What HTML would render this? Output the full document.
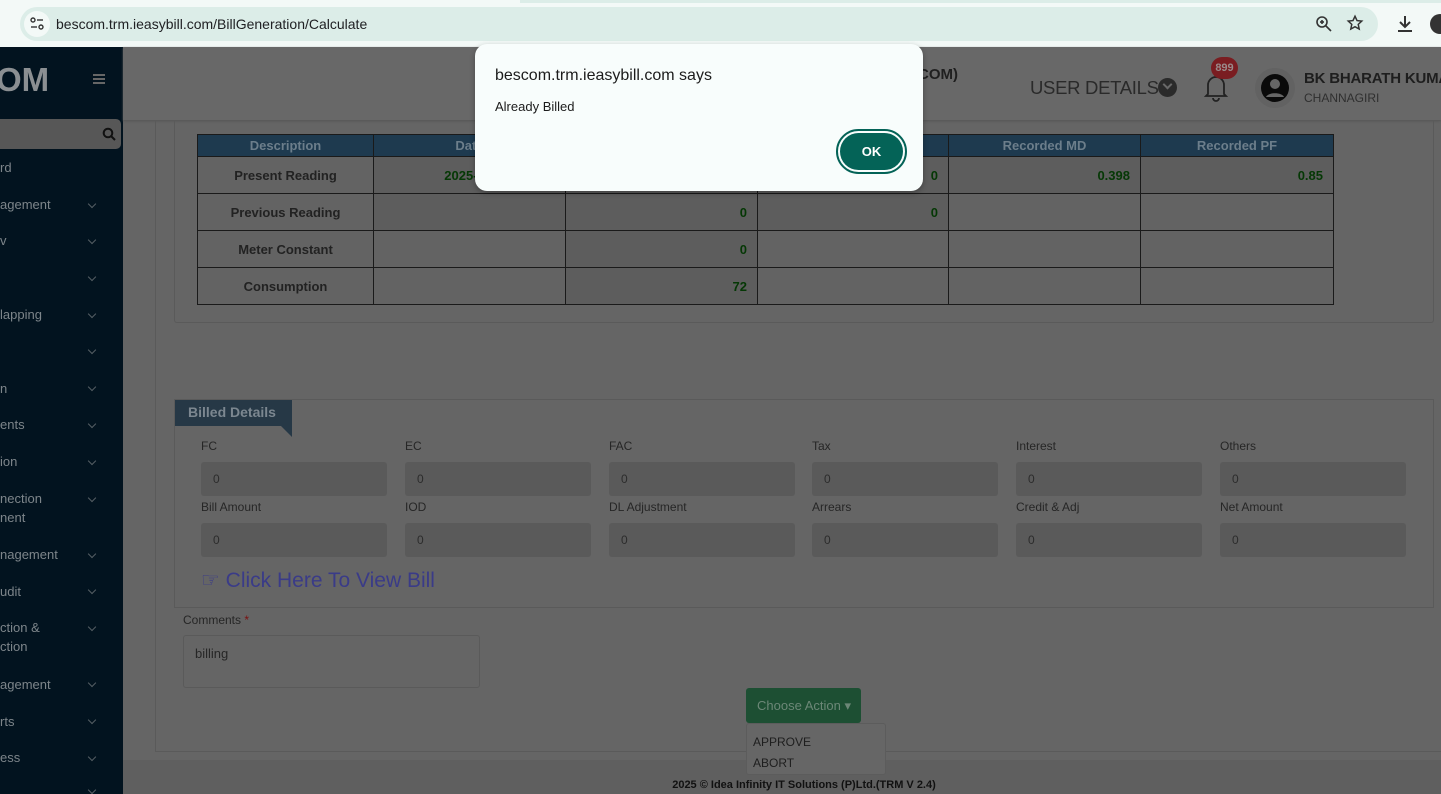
<!DOCTYPE html>
<html><head><meta charset="utf-8"><style>
*{box-sizing:border-box;margin:0;padding:0}
body{width:1441px;height:794px;overflow:hidden;position:relative;background:#656565;font-family:"Liberation Sans",sans-serif}
.abs{position:absolute}
.side{left:0;top:47px;width:123px;height:747px;background:#02131f}
.si{position:absolute;left:0;color:#7d858a;font-size:13px;line-height:19px}
.chev{position:absolute;left:89px;width:6px;height:6px;border-right:1.3px solid #555e64;border-bottom:1.3px solid #555e64;transform:rotate(45deg)}
table{border-collapse:collapse;position:absolute;left:197px;top:134px}
td,th{border:1px solid #1a1a1a;font-size:13px}
th{background:#1e3a4f;color:#6c7e8b;height:22px;font-weight:bold}
td{height:37px;background:#636363;font-weight:bold;color:#222;text-align:center}
td.v{text-align:right;padding-right:10px;color:#053805;background:#5d5d5d}
.lbl{position:absolute;font-size:12px;color:#262626}
.inp{position:absolute;width:186px;height:34px;background:#5a5a5a;border-radius:3px;font-size:12px;color:#2c2c2c;padding:10px 12px}
</style></head><body>
<div class="abs" style="left:0;top:0;width:1441px;height:47px;background:#f3f9f7"></div>
<div class="abs" style="left:520px;top:0;width:921px;height:3px;background:#dcede8"></div>
<div class="abs" style="left:20px;top:7px;width:1358px;height:34px;border-radius:17px;background:#dcede8"></div>
<div class="abs" style="left:24px;top:11px;width:26px;height:26px;border-radius:13px;background:#f3f9f7"></div>
<svg class="abs" style="left:29px;top:16px" width="16" height="16" viewBox="0 0 16 16" fill="none" stroke="#333" stroke-width="1.4"><circle cx="4" cy="4" r="2"/><line x1="8" y1="4" x2="14" y2="4"/><line x1="2" y1="11" x2="8" y2="11"/><circle cx="12" cy="11" r="2"/></svg>
<div class="abs" style="left:56px;top:16px;font-size:14px;color:#202124">bescom.trm.ieasybill.com/BillGeneration/Calculate</div>
<svg class="abs" style="left:1315px;top:15px" width="18" height="18" viewBox="0 0 18 18" fill="none" stroke="#333" stroke-width="1.6"><circle cx="7" cy="7" r="5"/><line x1="11" y1="11" x2="16" y2="16"/><line x1="5" y1="7" x2="9" y2="7"/><line x1="7" y1="5" x2="7" y2="9"/></svg>
<svg class="abs" style="left:1346px;top:14px" width="18" height="18" viewBox="0 0 24 24" fill="none" stroke="#333" stroke-width="2"><path d="M12 3l2.7 5.8 6.3.7-4.7 4.3 1.3 6.2L12 16.9 6.4 20l1.3-6.2L3 9.5l6.3-.7z"/></svg>
<svg class="abs" style="left:1396px;top:14px" width="18" height="20" viewBox="0 0 18 20" fill="none" stroke="#333" stroke-width="2"><path d="M9 2v11M4 8l5 5 5-5M2 17h14"/></svg>
<div class="abs" style="left:1430px;top:14px;width:20px;height:20px;border-radius:10px;background:#333"></div>
<div class="abs side">
<div class="abs" style="left:-4px;top:14px;font-size:33px;font-weight:bold;color:#8b8f92">OM</div>
<div class="abs" style="left:93px;top:27px;width:12px;height:2px;background:#666;box-shadow:0 4px 0 #666,0 8px 0 #666"></div>
<div class="abs" style="left:0;top:72px;width:121px;height:30px;background:#575757;border-radius:0 5px 5px 0"></div>
<svg class="abs" style="left:102px;top:80px" width="14" height="14" viewBox="0 0 14 14" fill="none" stroke="#111" stroke-width="2"><circle cx="6" cy="6" r="4.3"/><line x1="9" y1="9" x2="13" y2="13"/></svg>
<div class="si" style="top:111px">rd</div>
<div class="si" style="top:148px">agement</div><div class="chev" style="top:154px"></div>
<div class="si" style="top:184px">v</div><div class="chev" style="top:190px"></div>
<div class="chev" style="top:227px"></div>
<div class="si" style="top:258px">lapping</div><div class="chev" style="top:264px"></div>
<div class="chev" style="top:300px"></div>
<div class="si" style="top:332px">n</div><div class="chev" style="top:337px"></div>
<div class="si" style="top:368px">ents</div><div class="chev" style="top:374px"></div>
<div class="si" style="top:405px">ion</div><div class="chev" style="top:411px"></div>
<div class="si" style="top:442px">nection<br>nent</div><div class="chev" style="top:448px"></div>
<div class="si" style="top:498px">nagement</div><div class="chev" style="top:504px"></div>
<div class="si" style="top:535px">udit</div><div class="chev" style="top:540px"></div>
<div class="si" style="top:571px">ction &amp;<br>ction</div><div class="chev" style="top:577px"></div>
<div class="si" style="top:628px">agement</div><div class="chev" style="top:633px"></div>
<div class="si" style="top:665px">rts</div><div class="chev" style="top:670px"></div>
<div class="si" style="top:701px">ess</div><div class="chev" style="top:707px"></div>
<div class="chev" style="top:740px"></div>
</div>
<div class="abs" style="left:123px;top:47px;width:1318px;height:73px;background:#686868;box-shadow:0 1px 2px #555"></div>
<div class="abs" style="left:918px;top:66px;font-size:15px;font-weight:bold;color:#1f1f1f">COM)</div>
<div class="abs" style="left:1030px;top:77px;font-size:18.5px;color:#2a2a2a;letter-spacing:-0.3px;white-space:nowrap">USER DETAILS</div>
<div class="abs" style="left:1158px;top:78px;width:19px;height:19px;border-radius:10px;background:#2a2a2a"></div>
<div class="abs" style="left:1164px;top:81px;width:7px;height:7px;border-right:2px solid #686868;border-bottom:2px solid #686868;transform:rotate(45deg)"></div>
<svg class="abs" style="left:1203px;top:72px" width="26" height="30" viewBox="0 0 26 30" fill="none" stroke="#222" stroke-width="1.8"><path d="M5 22V13a8 8 0 0 1 16 0v9l2 2H3z"/><path d="M10 26a3 3 0 0 0 6 0"/></svg>
<div class="abs" style="left:1211px;top:57px;width:27px;height:22px;border-radius:11px;background:#7a1d21;color:#9a8a8a;font-size:11px;font-weight:bold;text-align:center;line-height:22px">899</div>
<div class="abs" style="left:1255px;top:68px;width:40px;height:40px;border-radius:20px;background:#626262"></div>
<svg class="abs" style="left:1260px;top:73px" width="30" height="30" viewBox="0 0 30 30"><circle cx="15" cy="15" r="14" fill="#0a0a0a"/><circle cx="15" cy="11" r="5" fill="#666"/><path d="M6 24c2-5 16-5 18 0" fill="#666"/></svg>
<div class="abs" style="left:1304px;top:70px;font-size:15px;font-weight:bold;color:#1e1e1e;white-space:nowrap;letter-spacing:-0.2px">BK BHARATH KUMA</div>
<div class="abs" style="left:1304px;top:91px;font-size:12px;color:#2f2f2f">CHANNAGIRI</div>
<div class="abs" style="left:155px;top:120px;width:1290px;height:632px;border:1px solid #5a5a5a;border-top:none"></div>
<div class="abs" style="left:174px;top:120px;width:1260px;height:203px;border:1px solid #5a5a5a;border-top:none;border-radius:0 0 3px 3px"></div>
<table>
<tr><th style="width:176px">Description</th><th style="width:192px">Date</th><th style="width:192px"></th><th style="width:191px"></th><th style="width:192px">Recorded MD</th><th style="width:193px">Recorded PF</th></tr>
<tr><td>Present Reading</td><td class="v" style="text-align:center">2025-1</td><td class="v"></td><td class="v">0</td><td class="v">0.398</td><td class="v">0.85</td></tr>
<tr><td>Previous Reading</td><td class="v"></td><td class="v">0</td><td class="v">0</td><td></td><td></td></tr>
<tr><td>Meter Constant</td><td></td><td class="v">0</td><td></td><td></td><td></td></tr>
<tr><td>Consumption</td><td></td><td class="v">72</td><td></td><td></td><td></td></tr>
</table>
<div class="abs" style="left:174px;top:399px;width:1260px;height:209px;border:1px solid #5a5a5a"></div>
<div class="abs" style="left:175px;top:400px;width:117px;height:26px;background:#263846;color:#7c8790;font-size:14px;font-weight:bold;padding:4px 13px">Billed Details</div>
<div class="abs" style="left:281px;top:426px;width:0;height:0;border-left:11px solid transparent;border-top:11px solid #263846"></div>
<div class="lbl" style="left:201px;top:439px">FC</div><div class="inp" style="left:201px;top:462px">0</div>
<div class="lbl" style="left:405px;top:439px">EC</div><div class="inp" style="left:405px;top:462px">0</div>
<div class="lbl" style="left:609px;top:439px">FAC</div><div class="inp" style="left:609px;top:462px">0</div>
<div class="lbl" style="left:812px;top:439px">Tax</div><div class="inp" style="left:812px;top:462px">0</div>
<div class="lbl" style="left:1016px;top:439px">Interest</div><div class="inp" style="left:1016px;top:462px">0</div>
<div class="lbl" style="left:1220px;top:439px">Others</div><div class="inp" style="left:1220px;top:462px">0</div>
<div class="lbl" style="left:201px;top:500px">Bill Amount</div><div class="inp" style="left:201px;top:523px">0</div>
<div class="lbl" style="left:405px;top:500px">IOD</div><div class="inp" style="left:405px;top:523px">0</div>
<div class="lbl" style="left:609px;top:500px">DL Adjustment</div><div class="inp" style="left:609px;top:523px">0</div>
<div class="lbl" style="left:812px;top:500px">Arrears</div><div class="inp" style="left:812px;top:523px">0</div>
<div class="lbl" style="left:1016px;top:500px">Credit &amp; Adj</div><div class="inp" style="left:1016px;top:523px">0</div>
<div class="lbl" style="left:1220px;top:500px">Net Amount</div><div class="inp" style="left:1220px;top:523px">0</div>
<div class="abs" style="left:201px;top:568px;font-size:21px;color:#3a3b88;white-space:nowrap">☞ Click Here To View Bill</div>
<div class="lbl" style="left:183px;top:613px">Comments <span style="color:#7a1010">*</span></div>
<div class="abs" style="left:183px;top:635px;width:297px;height:53px;border:1px solid #5a5a5a;border-radius:3px;font-size:13px;color:#262626;padding:10px 11px">billing</div>
<div class="abs" style="left:123px;top:760px;width:1318px;height:34px;background:#5f5f5f"></div>
<div class="abs" style="left:123px;top:779px;width:1362px;text-align:center;font-size:11px;font-weight:bold;color:#111">2025 © Idea Infinity IT Solutions (P)Ltd.(TRM V 2.4)</div>
<div class="abs" style="left:746px;top:688px;width:115px;height:35px;background:#1d4f33;border-radius:3px;color:#6c8777;font-size:13px;padding:10px 11px;white-space:nowrap">Choose Action ▾</div>
<div class="abs" style="left:746px;top:723px;width:140px;height:52px;background:#666;border:1px solid #5c5c5c;border-radius:3px;font-size:12px;color:#1e1e1e"><div style="position:absolute;left:6px;top:11px">APPROVE</div><div style="position:absolute;left:6px;top:32px">ABORT</div></div>
<div class="abs" style="left:475px;top:44px;width:448px;height:147px;background:#f8fdfc;border-radius:12px;box-shadow:0 2px 6px rgba(0,0,0,.3)"></div>
<div class="abs" style="left:495px;top:67px;font-size:16px;color:#1c1c1c">bescom.trm.ieasybill.com says</div>
<div class="abs" style="left:495px;top:99px;font-size:13px;color:#1c1c1c">Already Billed</div>
<div class="abs" style="left:836px;top:129px;width:71px;height:45px;border-radius:23px;border:2px solid #046357;padding:2px"><div style="width:100%;height:100%;border-radius:20px;background:#046357;color:#fff;font-size:13px;font-weight:bold;text-align:center;line-height:37px">OK</div></div>
</body></html>
